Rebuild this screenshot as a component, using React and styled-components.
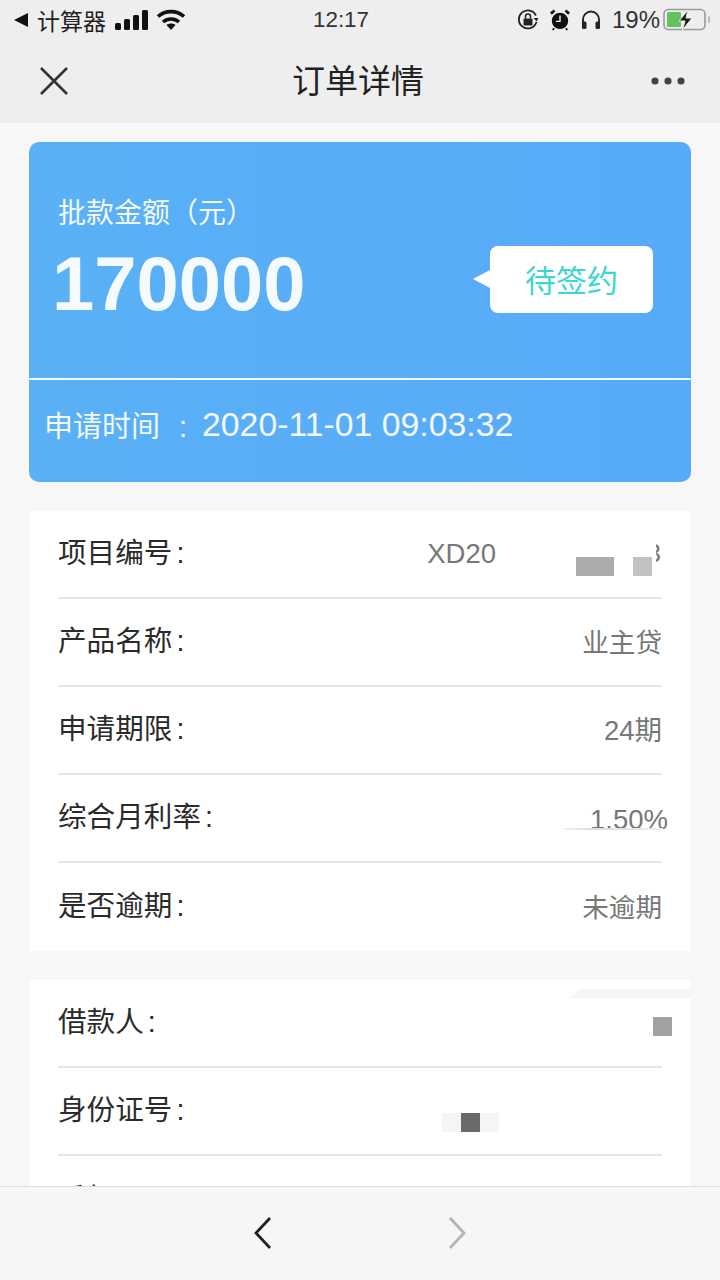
import React from "react";
import styled, { createGlobalStyle } from "styled-components";

const GlobalStyle = createGlobalStyle`
  html, body {
    margin: 0;
    padding: 0;
    background: #f7f7f7;
  }
  * {
    box-sizing: border-box;
  }
`;

const Page = styled.div`
  width: 720px;
  height: 1280px;
  display: flex;
  flex-direction: column;
  overflow: hidden;
  background: #f7f7f7;
  font-family: "Liberation Sans", "Noto Sans CJK SC", sans-serif;
`;

const Header = styled.div`
  flex-shrink: 0;
  height: 123px;
  background: #eeeeee;
`;

const StatusBar = styled.div`
  height: 40px;
  padding: 0 9px 0 13px;
  display: flex;
  align-items: center;
  color: #222;
  font-size: 23px;
`;

const StatusLeft = styled.div`
  display: flex;
  align-items: center;
  gap: 8px;
  flex: 1;
`;

const CarrierName = styled.span`
  margin-right: 1px;
`;

const StatusTime = styled.div`
  font-size: 22.4px;
  color: #333;
  margin-right: 42px;
`;

const StatusRight = styled.div`
  display: flex;
  align-items: center;
  justify-content: flex-end;
  gap: 11px;
  flex: 1;
`;

const Percent = styled.span`
  font-size: 24px;
  color: #333;
  margin-right: -8px;
`;

const NavBar = styled.div`
  height: 83px;
  padding: 0 34px 1px 38px;
  display: flex;
  align-items: center;
  justify-content: space-between;
`;

const NavTitle = styled.div`
  font-size: 33px;
  line-height: 40px;
  font-weight: 400;
  color: #222;
  margin: 2px 0 0 -4px;
`;

const Main = styled.div`
  flex: 1;
  min-height: 0;
  overflow: hidden;
  padding: 19px 29px 0;
  display: flex;
  flex-direction: column;
  gap: 29px;
`;

const AmountCard = styled.div`
  flex-shrink: 0;
  height: 340px;
  border-radius: 10px;
  overflow: hidden;
  color: #fff;
  background: linear-gradient(90deg, #5ab1f5 0%, #57aaf9 100%);
`;

const AmountTop = styled.div`
  height: 238px;
  padding: 53px 38px 0 23px;
  border-bottom: 2px solid #f4f9fe;
  display: flex;
  align-items: flex-start;
  justify-content: space-between;
`;

const AmountLabel = styled.div`
  font-size: 28px;
  line-height: 38px;
  padding-left: 6px;
  color: #f2f8fe;
`;

const AmountValue = styled.div`
  font-size: 76px;
  line-height: 88px;
  font-weight: 700;
  color: #f5fafe;
  margin-top: 7px;
`;

const StatusBubble = styled.div`
  position: relative;
  width: 163px;
  height: 67px;
  margin-top: 51px;
  padding-bottom: 2px;
  border-radius: 8px;
  background: #fff;
  color: #3ed6d0;
  font-size: 31px;
  display: flex;
  align-items: center;
  justify-content: center;

  &::before {
    content: "";
    position: absolute;
    left: -17px;
    top: 24px;
    border-style: solid;
    border-width: 9px 17px 9px 0;
    border-color: transparent #fff transparent transparent;
  }
`;

const AmountBottom = styled.div`
  height: 100px;
  padding: 0 0 12px 15px;
  display: flex;
  align-items: center;
  font-size: 33.8px;
  color: #f2f8fe;
`;

const TimeLabel = styled.span`
  font-size: 29px;
  width: 158px;
  flex-shrink: 0;
`;

const Colon = styled.span`
  margin-left: ${(p) => p.$gap}px;
`;

const Panel = styled.div`
  position: relative;
  flex-shrink: 0;
  background: #fff;
  padding: 0 29px;
`;

const Row = styled.div`
  height: 88px;
  display: flex;
  align-items: center;
  justify-content: space-between;
  padding-bottom: 8px;
  border-bottom: ${(p) => (p.$last ? "none" : "2px solid #e6e6e6")};
`;

const Label = styled.div`
  font-size: 28.6px;
  color: #2b2b2b;
`;

const Value = styled.div`
  font-size: ${(p) => p.$size || 26.6}px;
  color: #777;
  margin-top: ${(p) => p.$top ?? 5}px;
  margin-right: ${(p) => p.$shift || 0}px;
`;

const Mask = styled.div`
  position: absolute;
  left: ${(p) => p.$x}px;
  top: ${(p) => p.$y}px;
  width: ${(p) => p.$w}px;
  height: ${(p) => p.$h}px;
  background: ${(p) => p.$color};
`;

const Smudge = styled(Mask)`
  clip-path: polygon(10% 0, 100% 0, 100% 100%, 0 100%);
`;

// 被打码后只露出一半的数字
const CutDigit = styled.span`
  position: absolute;
  left: 627px;
  top: 27px;
  width: 5px;
  overflow: hidden;
  direction: rtl;
  font-size: 26.6px;
  color: #777;
`;

const Footer = styled.div`
  flex-shrink: 0;
  height: 94px;
  background: #f6f6f6;
  border-top: 1px solid #dedede;
  padding: 0 253px 2px 253px;
  display: flex;
  align-items: center;
  justify-content: space-between;
`;

const CloseIcon = () => (
  <svg width="32" height="32" viewBox="0 0 32 32">
    <path d="M3 3 L29 29 M29 3 L3 29" stroke="#333" strokeWidth="2.6" fill="none" />
  </svg>
);

const MoreIcon = () => (
  <svg width="36" height="10" viewBox="0 0 36 10">
    <circle cx="5" cy="5" r="3.6" fill="#444" />
    <circle cx="18" cy="5" r="3.6" fill="#444" />
    <circle cx="31" cy="5" r="3.6" fill="#444" />
  </svg>
);

const BackTriangle = () => (
  <svg width="16" height="16" viewBox="0 0 16 16">
    <path d="M1 8 L15 1 V15 Z" fill="#111" />
  </svg>
);

const SignalIcon = () => (
  <svg width="33" height="21" viewBox="0 0 33 21">
    <rect x="0" y="13" width="6" height="7" rx="1.5" fill="#111" />
    <rect x="9" y="9" width="6" height="11" rx="1.5" fill="#111" />
    <rect x="18" y="5" width="6" height="15" rx="1.5" fill="#111" />
    <rect x="27" y="0" width="6" height="20" rx="1.5" fill="#111" />
  </svg>
);

const WifiIcon = () => (
  <svg width="30" height="22" viewBox="0 0 30 22">
    <path d="M2 7.5 C9.5 1 20.5 1 28 7.5" stroke="#111" strokeWidth="3.6" fill="none" />
    <path d="M7 13 C11.5 9 18.5 9 23 13" stroke="#111" strokeWidth="3.6" fill="none" />
    <path d="M10.5 16 C13 14 17 14 19.5 16 L15 21 Z" fill="#111" />
  </svg>
);

const RotateLockIcon = () => (
  <svg width="22" height="22" viewBox="0 0 22 22">
    <path d="M19.5 13 A9 9 0 1 1 19 6.5" stroke="#222" strokeWidth="1.8" fill="none" />
    <path d="M21.5 9 L16.5 9 L19.5 12.5 Z" fill="#222" />
    <rect x="6.5" y="9.5" width="9" height="7" rx="1" fill="#222" />
    <path d="M8.5 9.5 V7.5 A2.5 2.5 0 0 1 13.5 7.5 V9.5" stroke="#222" strokeWidth="1.5" fill="none" />
  </svg>
);

const AlarmIcon = () => (
  <svg width="20" height="22" viewBox="0 0 22 24">
    <circle cx="11" cy="13" r="9" fill="#111" />
    <path d="M11 7 V13.5 H6.5" stroke="#eee" strokeWidth="1.6" fill="none" />
    <path d="M1 5 L5 1.5 M21 5 L17 1.5" stroke="#111" strokeWidth="3" />
    <path d="M4.5 21 L3 23 M17.5 21 L19 23" stroke="#111" strokeWidth="2" />
  </svg>
);

const HeadphoneIcon = () => (
  <svg width="20" height="20" viewBox="0 0 20 20">
    <path d="M2 13 V9.5 A8 8 0 0 1 18 9.5 V13" stroke="#222" strokeWidth="1.9" fill="none" />
    <rect x="1" y="11.5" width="4.5" height="7.5" rx="1.5" fill="#222" />
    <rect x="14.5" y="11.5" width="4.5" height="7.5" rx="1.5" fill="#222" />
  </svg>
);

const BatteryIcon = () => (
  <svg width="48" height="24" viewBox="0 0 48 24">
    <rect x="1" y="1.5" width="41" height="20" rx="4.5" stroke="#9a9a9a" strokeWidth="1.6" fill="none" />
    <rect x="4" y="4" width="14" height="15" rx="1.5" fill="#63c25f" />
    <rect x="45" y="8" width="2" height="7" rx="1" fill="#bbb" />
    <path d="M25 2 L16 13 H22 L19.5 22 L29 10 H23 Z" fill="#1b1b1b" stroke="#eee" strokeWidth="1" />
  </svg>
);

const Chevron = ({ d, color }) => (
  <svg width="20" height="34" viewBox="0 0 20 34">
    <path d={d} stroke={color} strokeWidth="2.8" fill="none" />
  </svg>
);

const orderRows = [
  { label: "项目编号", value: "XD20", shift: 166, size: 27.5, top: 7 },
  { label: "产品名称", value: "业主贷" },
  { label: "申请期限", value: "24期", size: 27.5, top: 3 },
  { label: "综合月利率", value: "1.50%", shift: -6, size: 27.5, top: 11 },
  { label: "是否逾期", value: "未逾期" },
];

const App = () => {
  return (
    <Page>
      <GlobalStyle />
      <Header>
        <StatusBar>
          <StatusLeft>
            <BackTriangle />
            <CarrierName>计算器</CarrierName>
            <SignalIcon />
            <WifiIcon />
          </StatusLeft>
          <StatusTime>12:17</StatusTime>
          <StatusRight>
            <RotateLockIcon />
            <AlarmIcon />
            <HeadphoneIcon />
            <Percent>19%</Percent>
            <BatteryIcon />
          </StatusRight>
        </StatusBar>
        <NavBar>
          <CloseIcon />
          <NavTitle>订单详情</NavTitle>
          <MoreIcon />
        </NavBar>
      </Header>

      <Main>
        <AmountCard>
          <AmountTop>
            <div>
              <AmountLabel>批款金额（元）</AmountLabel>
              <AmountValue>170000</AmountValue>
            </div>
            <StatusBubble>待签约</StatusBubble>
          </AmountTop>
          <AmountBottom>
            <TimeLabel>
              申请时间<Colon $gap={19}>:</Colon>
            </TimeLabel>
            2020-11-01 09:03:32
          </AmountBottom>
        </AmountCard>

        <Panel>
          {orderRows.map((row, i) => (
            <Row key={row.label} $last={i === orderRows.length - 1}>
              <Label>
                {row.label}
                <Colon $gap={4}>:</Colon>
              </Label>
              <Value $shift={row.shift} $size={row.size} $top={row.top}>
                {row.value}
              </Value>
            </Row>
          ))}
          {/* 打码的遮挡块 */}
          <CutDigit>3</CutDigit>
          <Mask $x={547} $y={46} $w={38} $h={19} $color="#acacac" />
          <Mask $x={604} $y={46} $w={19} $h={19} $color="#c2c2c2" />
          <Mask $x={534} $y={317} $w={100} $h={2} $color="linear-gradient(90deg, #f2f2f2, #dcdcdc 30%, #eeeeee)" />
        </Panel>

        <Panel>
          <Row>
            <Label>
              借款人<Colon $gap={4}>:</Colon>
            </Label>
          </Row>
          <Row>
            <Label>
              身份证号<Colon $gap={4}>:</Colon>
            </Label>
          </Row>
          <Row $last>
            <Label>手机号码</Label>
          </Row>
          <Mask $x={624} $y={37} $w={19} $h={19} $color="#a2a2a2" />
          <Mask $x={413} $y={133} $w={57} $h={19} $color="#f5f5f5" />
          <Mask $x={432} $y={133} $w={19} $h={19} $color="#6a6a6a" />
          <Smudge $x={540} $y={9} $w={122} $h={9} $color="#f6f6f6" />
        </Panel>
      </Main>

      <Footer>
        <Chevron d="M17 2 L3 17 L17 32" color="#222" />
        <Chevron d="M3 2 L17 17 L3 32" color="#b4b4b4" />
      </Footer>
    </Page>
  );
};

export default App;
